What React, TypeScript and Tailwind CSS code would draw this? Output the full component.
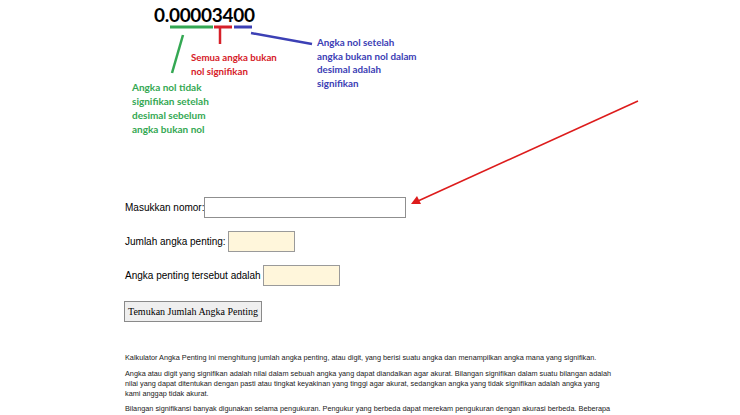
import React from "react";

export default function App() {
  const lato = { fontFamily: "Lato, 'Noto Sans', sans-serif" };
  return (
    <div className="relative w-[740px] h-[415px] overflow-hidden bg-white" style={{ fontFamily: "'Liberation Sans', Arial, sans-serif" }}>
      {/* diagram */}
      <div className="relative h-[190px] w-[740px]">
        <div className="absolute left-[154px] top-[5px] text-[19px] font-bold leading-none text-black tracking-[-0.3px]" style={lato}>
          0.00003400
        </div>
        <svg className="absolute left-0 top-0" width="740" height="190" viewBox="0 0 740 190">
          <line x1="170" y1="27" x2="213" y2="27" stroke="#34a853" strokeWidth="3" />
          <line x1="183" y1="35" x2="172" y2="73" stroke="#34a853" strokeWidth="2.5" />
          <line x1="214" y1="27" x2="232" y2="27" stroke="#d62029" strokeWidth="3" />
          <line x1="220" y1="28" x2="220" y2="44" stroke="#d62029" strokeWidth="2.5" />
          <line x1="234" y1="27" x2="252" y2="27" stroke="#3c40b5" strokeWidth="3" />
          <line x1="251" y1="33" x2="312" y2="44" stroke="#3c40b5" strokeWidth="2.5" />
        </svg>
        <div className="absolute left-[191px] top-[50px] text-[9.7px] font-bold leading-[14px] text-[#d62029]" style={lato}>
          Semua angka bukan<br />nol signifikan
        </div>
        <div className="absolute left-[317px] top-[36px] text-[9.8px] font-bold leading-[13.5px] text-[#3c40b5]" style={lato}>
          Angka nol setelah<br />angka bukan nol dalam<br />desimal adalah<br />signifikan
        </div>
        <div className="absolute left-[132px] top-[80px] text-[10px] font-bold leading-[14px] text-[#34a853]" style={lato}>
          Angka nol tidak<br />signifikan setelah<br />desimal sebelum<br />angka bukan nol
        </div>
      </div>

      <svg className="absolute left-0 top-0 pointer-events-none" width="740" height="415" viewBox="0 0 740 415">
        <line x1="638" y1="101" x2="418" y2="201" stroke="#dd1c1c" strokeWidth="1.6" />
        <polygon points="411,204 417,196 421,204" fill="#dd1c1c" />
      </svg>

      <div className="ml-[125px] w-[490px] text-black">
        <div className="flex items-center h-[21px] mt-[7px] text-[10px]">
          <span>Masukkan nomor:</span>
          <div className="w-[202px] h-[21px] border border-[#8f8f8f] bg-white" />
        </div>
        <div className="flex items-center h-[21px] mt-[13px] text-[10px]">
          <span>Jumlah angka penting:</span>
          <div className="ml-[2px] w-[67px] h-[21px] border border-[#9a9a9a] bg-[#fff6db]" />
        </div>
        <div className="flex items-center h-[21px] mt-[13px] text-[10px]">
          <span>Angka penting tersebut adalah</span>
          <div className="ml-[2px] w-[77px] h-[21px] border border-[#9a9a9a] bg-[#fff6db]" />
        </div>
        <div className="mt-[12px]">
          <div className="inline-flex items-center h-[21px] px-[3px] -ml-[1px] border border-[#8a8a8a] bg-[#efefef] text-[10px]" style={{ fontFamily: "'Liberation Serif', 'Times New Roman', serif" }}>
            Temukan Jumlah Angka Penting
          </div>
        </div>
        <div className="mt-[31px] text-[7.3px] leading-[10px] text-[#1a1a1a]">
          <p>Kalkulator Angka Penting ini menghitung jumlah angka penting, atau digit, yang berisi suatu angka dan menampilkan angka mana yang signifikan.</p>
          <p className="mt-[6px]">Angka atau digit yang signifikan adalah nilai dalam sebuah angka yang dapat diandalkan agar akurat. Bilangan signifikan dalam suatu bilangan adalah nilai yang dapat ditentukan dengan pasti atau tingkat keyakinan yang tinggi agar akurat, sedangkan angka yang tidak signifikan adalah angka yang kami anggap tidak akurat.</p>
          <p className="mt-[5px]">Bilangan signifikansi banyak digunakan selama pengukuran. Pengukur yang berbeda dapat merekam pengukuran dengan akurasi berbeda. Beberapa alat pengukur mungkin memiliki tingkat presisi yang lebih tinggi daripada yang lain, sehingga angka penting menunjukkan ketelitian pengukuran.</p>
        </div>
      </div>
    </div>
  );
}
